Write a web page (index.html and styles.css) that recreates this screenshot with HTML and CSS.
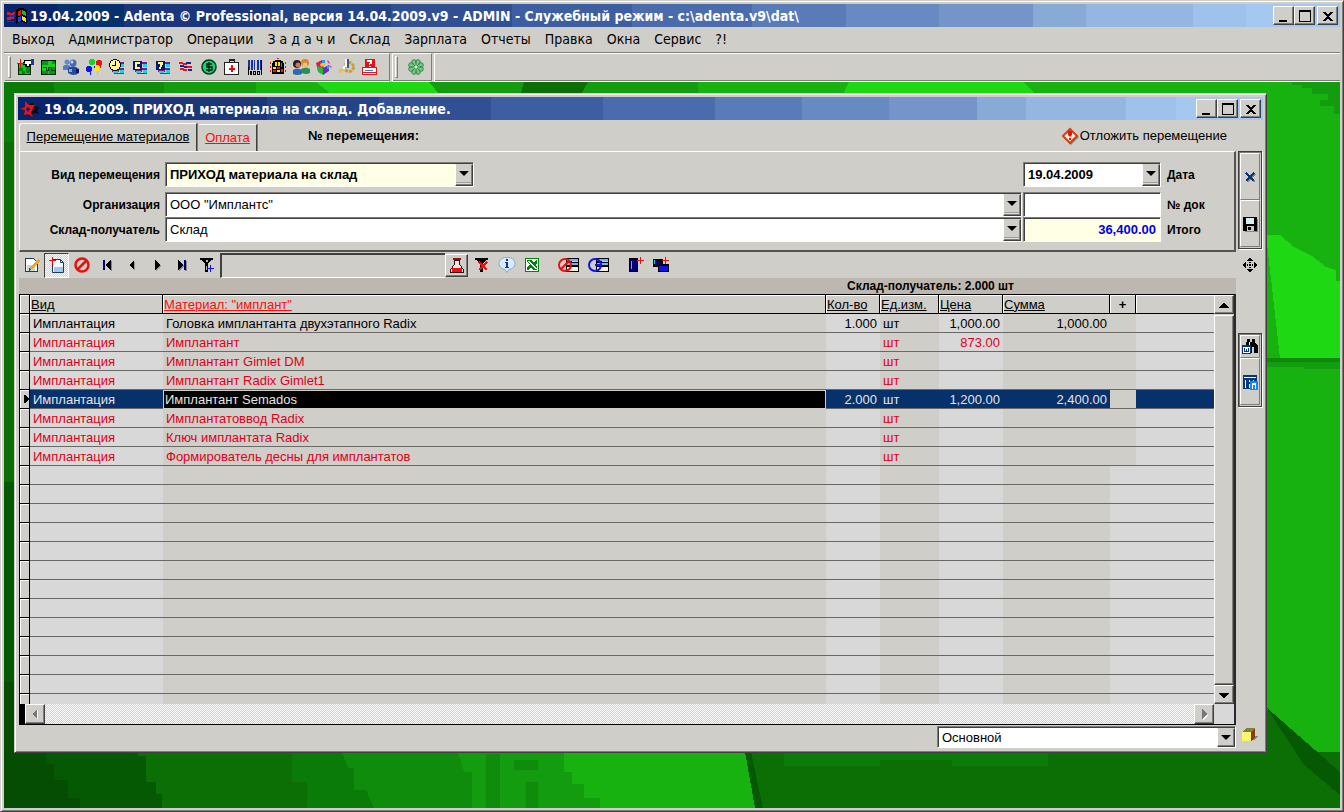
FILE: index.html
```
<!DOCTYPE html>
<html lang="ru">
<head>
<meta charset="utf-8">
<title>Adenta Professional</title>
<link rel="stylesheet" href="styles.css">
</head>
<body>
<div class="app">
  <header class="titlebar">
    <svg class="title-icon wide" viewBox="0 0 22 18"><path fill="#f01018" d="M1 5h3v1h3v-1h2v2h-1v1H1zM1 10h7v2H5v1H1z"/><path fill="#1838b0" d="M3 8h6v2H3zM1 14h7v1H1z"/><path fill="#000" d="M10 3l3-2h4l4 2v14l-4-2h-3l-4 2z"/><path fill="#f01018" d="M12 4l3-1v5l-3 1z"/><path fill="#10c020" d="M16 3l4 2v4l-4-2z"/><path fill="#1848e8" d="M12 10l3-1v5l-3 1z"/><path fill="#f8e010" d="M16 9l4 2v4l-4-2z"/></svg>
    <h1 class="title-text">19.04.2009 - Adenta © Professional, версия 14.04.2009.v9 - ADMIN - Служебный режим - c:\adenta.v9\dat\</h1>
    <div class="caption-buttons">
      <button class="cap" aria-label="Свернуть"><svg viewBox="0 0 16 14"><path d="M3 11h8v2H3z"/></svg></button>
      <button class="cap" aria-label="Развернуть"><svg viewBox="0 0 16 14"><path fill-rule="evenodd" d="M2 1h12v12H2zM3 3v9h10V3z"/></svg></button>
      <button class="cap cap-close" aria-label="Закрыть"><svg viewBox="0 0 16 14"><path d="M3 3h3v1h1v1h2V4h1V3h3v1h-1v1h-1v1h-1v1H9v1h1v1h1v1h1v1h1v1h-3v-1H9v-1H7v1H6v1H3v-1h1v-1h1V9h1V8h1V7H6V6H5V5H4V4H3z"/></svg></button>
    </div>
  </header>

  <nav class="menubar">
    <button>Выход</button><button>Администратор</button><button>Операции</button><button>З а д а ч и</button><button>Склад</button><button>Зарплата</button><button>Отчеты</button><button>Правка</button><button>Окна</button><button>Сервис</button><button>?!</button>
  </nav>

  <div class="toolbar">
    <div class="band">
      <span class="grip"></span>
      <button class="tool" aria-label="Ввод"><svg viewBox="0 0 18 18"><path fill="#002800" d="M2 5h13v12H2z"/><path fill="#10c818" d="M3 6h11v10H3z"/><path fill="#008a0c" d="M3 10h4v3H3zM10 9h4v6h-4zM6 13h3v3H6z"/><path fill="#000" d="M8 2h8v5h-2v2H9V7H7z"/><path fill="#fff" d="M9 3h6v3h-2v2h-2V6H9z"/><path fill="#20389c" d="M15 1h3v6h-3z"/><path fill="#f01010" d="M4 1h1v9H4zM1 5h8v1H1z"/></svg></button>
      <button class="tool" aria-label="График"><svg viewBox="0 0 18 18"><path fill="#001800" d="M2 2h15v15H2z"/><path fill="#18d020" d="M3 3h13v13H3z"/><path fill="#009a10" d="M3 3h6v4H3zM10 9h6v7h-6zM3 13h6v3H3zM13 3h3v3h-3z"/><path fill="#003808" d="M4 9h4v1H4zM7 10h1v3H7zM8 12h2v1H8zM9 9h1v3H9zM10 9h3v1h-3zM12 10h1v3h-1zM13 12h3v1h-3z"/></svg></button>
      <button class="tool" aria-label="Пациенты"><svg class="soft" viewBox="0 0 18 18"><circle cx="5" cy="4" r="2.500" fill="#6888d0"/><path fill="#5878c8" d="M1 8q4-3 7 0v4H1z"/><circle cx="11" cy="5" r="3.500" fill="#4468b8"/><circle cx="10" cy="4" r="1.500" fill="#c8d8f8"/><path fill="#284898" d="M6 10q6-4 11 1v4q-5 4-11 0z"/><path fill="#88a8e0" d="M7 11h3v3H7z"/><path fill="#101870" d="M14 11h3v4h-3z"/></svg></button>
      <button class="tool" aria-label="Шары"><svg viewBox="0 0 18 18"><circle cx="7" cy="4" r="3" fill="#10d820"/><circle cx="14" cy="5" r="3" fill="#f01010"/><circle cx="4" cy="11" r="3" fill="#1010f0"/><circle cx="12" cy="10" r="3" fill="#f8e810"/><path fill="#f01010" d="M15 8h1v2h-1z"/><path fill="#f8c010" d="M12 13h1v4h-1z"/><path fill="#1010f0" d="M5 14h1v3H5zM9 8h1v2H9z"/></svg></button>
      <button class="tool" aria-label="Время"><svg viewBox="0 0 18 18"><path fill="#801890" d="M10 4h6v2h-6zM4 12h7v2H4zM11 10h5v2h-5zM6 15h10v1H6z"/><path fill="#10d8e0" d="M12 6h4v3h-4zM5 13h5v2H5zM12 12h4v3h-4z"/><circle cx="7" cy="7" r="5.500" fill="#fff890" stroke="#000"/><path fill="#000" d="M7 3h1v5H4V7h3z"/></svg></button>
      <button class="tool" aria-label="Список C"><svg viewBox="0 0 18 18"><path fill="#801890" d="M10 4h6v2h-6zM4 12h7v2H4zM11 10h5v2h-5zM6 15h10v1H6z"/><path fill="#10d8e0" d="M12 6h4v3h-4zM5 13h5v2H5zM12 12h4v3h-4z"/><path fill="#001c70" d="M2 3h9v9H2z"/><path fill="#fff890" d="M4 4h5v2H6v3h3v2H4z"/></svg></button>
      <button class="tool" aria-label="Список 7"><svg viewBox="0 0 18 18"><path fill="#801890" d="M10 4h6v2h-6zM4 12h7v2H4zM11 10h5v2h-5zM6 15h10v1H6z"/><path fill="#10d8e0" d="M12 6h4v3h-4zM5 13h5v2H5zM12 12h4v3h-4z"/><path fill="#001c70" d="M2 3h9v9H2z"/><path fill="#fff890" d="M4 4h5v3H8v2H7v2H5V9h1V6H4z"/></svg></button>
      <button class="tool" aria-label="Обмен"><svg viewBox="0 0 18 18"><path fill="#f01018" d="M2 4h4v1h4v2H6V6H2zM10 8h5v2h-5zM3 10h4v1h3v2H6v-1H3z"/><path fill="#102890" d="M9 4h5v2H9zM3 7h4v2H3zM11 11h4v2h-4zM7 8h3v2H7z"/></svg></button>
      <button class="tool" aria-label="Касса"><svg class="soft" viewBox="0 0 18 18"><circle cx="9" cy="9" r="7" fill="#18d078" stroke="#003818" stroke-width="1.500"/><path fill="none" stroke="#001808" stroke-width="1.300" d="M12 6H7v3h5v3H6M9 4v10"/></svg></button>
      <button class="tool" aria-label="Аптечка"><svg viewBox="0 0 18 18"><path fill="#222" d="M6 1h6v4h-1V3H7v2H6z"/><rect x="1.500" y="4.500" width="14" height="12" rx="1" fill="#fff" stroke="#222"/><path fill="#e01010" d="M8 7h2v3h2v2h-2v2H8v-2H6v-2h2z"/></svg></button>
      <button class="tool" aria-label="Штрих-код"><svg viewBox="0 0 18 18"><path fill="#1830a0" d="M2 2h2v10H2zM5 2h2v10H5zM8 2h1v10H8zM11 2h2v10h-2zM14 2h1v10h-1z"/><path fill="#000" d="M2 9h1v8H2zM4 13h2v4H4zM7 13h3v4H7zM11 13h3v4h-3zM15 2h1v15h-1z"/><path fill="#d0cec9" d="M8 14h1v2H8zM12 14h1v2h-1z"/></svg></button>
      <button class="tool" aria-label="Календарь"><svg viewBox="0 0 18 18"><path fill="#000" d="M6 2h6v1h2v2h1v11H3V5h1V3h2z"/><path fill="#f8e818" d="M6 4h2v4H6zM9 4h2v4H9zM4 9h3v2H4zM8 12h3v2H8z"/><path fill="#10b818" d="M12 5h1v4h-1z"/><path fill="#f01818" d="M4 12h3v2H4zM8 9h3v2H8zM12 11h2v3h-2zM1 4h1v2H1zM1 8h1v2H1zM1 12h1v2H1zM16 4h1v2h-1zM16 8h1v2h-1zM16 12h1v2h-1zM8 0h2v1H8z"/></svg></button>
      <button class="tool" aria-label="Персонал"><svg class="soft" viewBox="0 0 18 18"><circle cx="13" cy="5" r="4" fill="#d88828"/><path fill="#289058" d="M9 11q5-3 9 0v4q-4 2-8 0z"/><circle cx="5" cy="6" r="4" fill="#282020"/><circle cx="6" cy="7" r="2.500" fill="#c87858"/><circle cx="13" cy="7" r="2.500" fill="#f0c080"/><path fill="#3068b8" d="M1 12q4-3 9 0v4q-5 2-9 0z"/></svg></button>
      <button class="tool" aria-label="Отчёты"><svg class="soft" viewBox="0 0 18 18"><path fill="#e01850" d="M1 5l6-3 2 9-6 2z"/><path fill="#20b838" d="M2 8l6 2v7l-5-3z"/><path fill="#7028c8" d="M8 10l6-3v6l-6 4z"/><path fill="#f8c020" d="M5 6l5-3 1 4-5 2z"/><path fill="#20a0d8" d="M7 2h3v3H7zM12 8h2v3h-2z"/><path fill="#f030d0" d="M12 2l2 1 1 3-2-1zM15 7l2 2-1 1-2-2z"/></svg></button>
      <button class="tool" aria-label="Настройка"><svg class="soft" viewBox="0 0 18 18"><circle cx="11" cy="9" r="4.500" fill="none" stroke="#d89828" stroke-width="3" stroke-dasharray="3 1"/><path fill="#e8c050" d="M1 11h5v2H4v2H1z"/><path fill="#286088" d="M9 1h2v9H9z"/><path fill="#f8f8f8" d="M7 1h2v8H7zM5 8h2v3H5z"/></svg></button>
      <button class="tool" aria-label="Справка"><svg viewBox="0 0 18 18"><path fill="#d02020" d="M1 9h15v8H1z"/><path fill="#f8f8f8" d="M2 10h13v4H2zM2 15h13v1H2z"/><path fill="#5070c0" d="M4 12h8v1H4z"/><path fill="#e81010" d="M4 1h10v9H4z"/><path fill="#fff" d="M6 2h5v4H9v1H8V5h1V4H6zM8 8h2v1H8z"/></svg></button>
    </div>
    <div class="band band-solo">
      <span class="grip"></span>
      <button class="tool tool-solo" aria-label="Клевер"><svg class="soft" viewBox="0 0 18 18"><g fill="#78c888" stroke="#388850"><circle cx="7" cy="4" r="2.300"/><circle cx="11" cy="4" r="2.300"/><circle cx="14" cy="7" r="2.300"/><circle cx="14" cy="11" r="2.300"/><circle cx="11" cy="14" r="2.300"/><circle cx="7" cy="14" r="2.300"/><circle cx="4" cy="11" r="2.300"/><circle cx="4" cy="7" r="2.300"/></g><circle cx="9" cy="9" r="4" fill="#78c888"/><path stroke="#388850" d="M9 3v12M3 9h12M5 5l8 8M13 5l-8 8"/><circle cx="9" cy="9" r="1.500" fill="#d0f0d0"/></svg></button>
    </div>
    <div class="band band-rest"></div>
  </div>

  <main class="desktop">
    <svg class="wallpaper" viewBox="0 0 1336 726" preserveAspectRatio="none" aria-hidden="true">
      <path fill="#17b20f" d="M0 0h1336v726H0z"/>
      <path fill="#139c0f" d="M0 0h252v20H0z"/><path fill="#108c0c" d="M0 0h160v20H0z"/><path fill="#0a7a08" d="M0 0h50v200H0z"/>
      <path fill="#1fd814" d="M312 0h113l12 14H330zM845 0h174l14 14H838z"/>
      <path fill="#139c0f" d="M425 0h115v14H437z"/><path fill="#0c6f05" d="M520 0h64l-8 14h-60z"/><path fill="#139c0f" d="M584 0h110v14H576z"/>
      <path fill="#0c6f05" d="M0 60h12v400H0z"/><path fill="#045902" d="M0 400h12v200H0z"/>
      <path fill="#139c0f" d="M0 670h560v20h8v12h12v14h16v10H0z"/>
      <path fill="#108c0c" d="M0 670h454l6 20h8v36H0zM482 672h14v54h-14zM510 678h24v10h-24zM522 700h12v26h-12z"/>
      <path fill="#0a7a08" d="M0 670h338l6 16h6v22h12l8 18H0z"/>
      <path fill="#0c6f05" d="M0 670h288v30h15v26H0z"/>
      <path fill="#045902" d="M0 670h134v4h8v26h10v12h6v14H0z"/>
      <path fill="#044d02" d="M0 600h12v70h30v12h8v16h14v18h12v10H0z"/>
      <path fill="#0c6f05" d="M742 670h594v56H752z"/><path fill="#045902" d="M741 670h6l12 56h-8z"/>
      <path fill="#0a7a08" d="M780 670h264v14h-96v-6h-72v6h-96z"/>
      <path fill="#0c6f05" d="M1262 626v100h74v-14z"/>
      <path fill="#045902" d="M1262 625l74 65v23l-36-30z"/>
      <path fill="#1fd814" d="M1262 153h14l14 12 18 9 14 11 10 3v11h14v4l8-9 8 5v77h-86z"/>
      <path fill="#0f8a08" d="M1262 276h74v4h-74z"/><path fill="#139c0f" d="M1262 280h74v7h-36v-2h-38z"/>
      <path fill="#139c0f" d="M1288 0h48v32h-6v-8h-14v-6h8v-6h-16V6h-10V3h-10z"/>
    </svg>

    <section class="child">
      <header class="titlebar">
        <svg class="title-icon soft" viewBox="0 0 20 18"><path fill="#100808" fill-rule="evenodd" d="M8 6l5-4 1 4 6 1-3 3 2 4-5-1-5 3 1-5zM12 7l-2 3 3 1 2-3z"/><path fill="#f01010" fill-rule="evenodd" d="M5 1l4 4h6l-2 3-2 5 2 4-5-3-4 1 1-5-5-1 5-2zM8 7L6 9l2 3 2-3z"/></svg>
        <h2 class="title-text">19.04.2009. ПРИХОД материала на склад. Добавление.</h2>
        <div class="caption-buttons">
          <button class="cap" aria-label="Свернуть"><svg viewBox="0 0 16 14"><path d="M3 11h8v2H3z"/></svg></button>
          <button class="cap" aria-label="Развернуть"><svg viewBox="0 0 16 14"><path fill-rule="evenodd" d="M2 1h12v12H2zM3 3v9h10V3z"/></svg></button>
          <button class="cap cap-close" aria-label="Закрыть"><svg viewBox="0 0 16 14"><path d="M3 3h3v1h1v1h2V4h1V3h3v1h-1v1h-1v1h-1v1H9v1h1v1h1v1h1v1h1v1h-3v-1H9v-1H7v1H6v1H3v-1h1v-1h1V9h1V8h1V7H6V6H5V5H4V4H3z"/></svg></button>
        </div>
      </header>

      <div class="tabs">
        <button class="tab tab-active">Перемещение материалов</button>
        <button class="tab tab-pay">Оплата</button>
        <strong class="move-no">№ перемещения:</strong>
        <button class="postpone"><svg class="soft" viewBox="0 0 18 18"><path fill="#888" d="M10 3l8 7-8 8-7-7z"/><path fill="#f4f0e8" stroke="#d04010" stroke-width="2" d="M9 2l7 7-7 7-7-7z"/><path fill="#f01010" d="M7 4h4v4l-2 2-2-2zM8 11h2v2H8z"/></svg>Отложить перемещение</button>
      </div>

      <div class="work">
        <div class="primary">
          <form class="form">
            <label for="kind">Вид перемещения</label>
            <div class="combo combo-kind"><select id="kind"><option>ПРИХОД материала на склад</option></select><span class="drop"></span></div>
            <div class="combo"><input id="date" class="strong" type="text" value="19.04.2009"><button type="button" class="drop" aria-label="Выбрать дату"></button></div>
            <label class="after" for="date">Дата</label>

            <label for="org">Организация</label>
            <div class="combo"><select id="org"><option>ООО "Имплантс"</option></select><span class="drop"></span></div>
            <div class="combo"><input id="doc" type="text" value=""></div>
            <label class="after" for="doc">№ док</label>

            <label for="store">Склад-получатель</label>
            <div class="combo"><select id="store"><option>Склад</option></select><span class="drop"></span></div>
            <div class="combo combo-total"><input id="total" class="total" type="text" value="36,400.00"></div>
            <label class="after" for="total">Итого</label>
          </form>

          <div class="gridbar">
            <button class="gtool" aria-label="Изменить"><svg viewBox="0 0 18 18"><path fill="#fff" stroke="#18386c" d="M2.500 2.500h8l4 4v9h-12z"/><path fill="#b8d8f8" d="M4 9h8v6H4z"/><path fill="#e8a820" d="M15 3l2 2-8 8-3 1 1-3z"/><path fill="#704010" d="M6 12l2 1-2 2z"/></svg></button>
            <button class="gtool pressed" aria-label="Добавить"><svg class="soft" viewBox="0 0 18 18"><path fill="#f4faff" stroke="#18386c" d="M4.500 3.500h8l3 3v10h-11z"/><path fill="#a0c8e8" d="M6 11h9v5H6z"/><path fill="none" stroke="#18386c" d="M12.500 3.500v3h3"/><path fill="#e01010" d="M4 1h1v8H4zM1 4h7v1H1z"/></svg></button>
            <button class="gtool" aria-label="Удалить"><svg class="soft" viewBox="0 0 18 18"><g fill="none" stroke="#e81010" stroke-width="2.500"><circle cx="9" cy="9" r="6.500"/><path d="M13 5l-9 9"/></g></svg></button>
            <button class="gtool" aria-label="Первая"><svg viewBox="0 0 18 18"><path fill="#888" d="M8 10l6-5v10z"/><path fill="#000078" d="M5 4h2v10H5z"/><path d="M7 9l6-5v10z"/></svg></button>
            <button class="gtool" aria-label="Назад"><svg viewBox="0 0 18 18"><path fill="#999" d="M7 10l5-5v10z"/><path d="M6 9l5-5v10z"/></svg></button>
            <button class="gtool" aria-label="Вперёд"><svg viewBox="0 0 18 18"><path fill="#999" d="M13 10L8 5v10z"/><path d="M12 9L7 4v10z"/></svg></button>
            <button class="gtool" aria-label="Последняя"><svg viewBox="0 0 18 18"><path fill="#888" d="M11 10L6 5v10zM12 5h2v10h-2z"/><path d="M11 9L5 4v10z"/><path fill="#000078" d="M11 4h2v10h-2z"/></svg></button>
            <button class="gtool" aria-label="Фильтр"><svg viewBox="0 0 18 18"><path d="M2 2h13v2h-2l-3 4v8H7V8L4 4H2z"/><path fill="#bbb" d="M8 4h2v2H8zM8 10h1v4H8z"/><path fill="#1010f0" d="M12 9h1v7h-1zM9 12h7v1H9z"/></svg></button>
            <input class="filter-input" type="text" aria-label="Фильтр">
            <button class="flask" aria-label="Применить фильтр"><svg viewBox="0 0 18 18"><path fill="#e8e8e8" stroke="#301010" d="M6.500 4v4l-4 6v2h13v-2l-4-6V4z"/><path fill="#901010" d="M5 2h8v2H5z"/><path fill="#f01010" d="M4 12h10v4H4z"/></svg></button>
            <button class="gtool" aria-label="Снять фильтр"><svg viewBox="0 0 18 18"><path d="M2 2h13v2h-2l-3 4v8H7V8L4 4H2z"/><path stroke="#f01010" stroke-width="2.500" d="M6 6l8 8M14 6l-8 8"/></svg></button>
            <button class="gtool" aria-label="Информация"><svg class="soft" viewBox="0 0 18 18"><path fill="#d8ecfc" stroke="#88a8d0" d="M9 1.500a7 6 0 0 1 2 12l-2 3-2-3a7 6 0 0 1 2-12z"/><path fill="#103890" d="M8 3h2v2H8zM7 6h3v5h1v1H7v-1h1V7H7z"/></svg></button>
            <button class="gtool" aria-label="Excel"><svg viewBox="0 0 18 18"><path fill="#088010" d="M2 2h14v14H2z"/><path fill="#fff" d="M3 3h12v12H3z"/><path fill="#088010" d="M4 4h5l2 3 2-3h1v3l-2 2 2 2v3h-4l-2-3-2 3H4v-3l3-2-3-4z"/><path stroke="#fff" stroke-width="1.500" d="M6 5l7 8"/></svg></button>
            <button class="gtool wide-a" aria-label="Скрыть строки"><svg viewBox="0 0 22 18"><path d="M9 2h13v14H9z"/><path fill="#78b0f0" d="M10 3h11v2H10zM10 7h11v2H10z"/><path fill="#d0cec9" d="M15 5h6v1h-6z"/><path fill="#f8f0d8" d="M10 11h11v4H10z"/><g class="soft" fill="none" stroke="#e81010" stroke-width="2"><circle cx="8" cy="9" r="6"/><path d="M12 5l-8 8"/></g></svg></button>
            <button class="gtool wide-b" aria-label="Показать строки"><svg viewBox="0 0 22 18"><path d="M9 2h13v14H9z"/><path fill="#78b0f0" d="M10 3h11v2H10zM10 7h11v2H10z"/><path fill="#d0cec9" d="M15 5h6v1h-6z"/><path fill="#f8f0d8" d="M10 11h11v4H10z"/><g class="soft" fill="none" stroke="#1010f0" stroke-width="2"><circle cx="8" cy="9" r="6"/><path d="M8 9h6"/></g></svg></button>
            <button class="gtool" aria-label="Добавить карточку"><svg viewBox="0 0 18 18"><path fill="#000" d="M2 2h9v14H2z"/><path fill="#000070" d="M3 4h7v11H3z"/><path fill="#18d0e8" d="M4 5h1v8H4z"/><path fill="#e81010" d="M13 1h1v7h-1zM10 4h7v1h-7z"/></svg></button>
            <button class="gtool" aria-label="Копировать карточку"><svg viewBox="0 0 18 18"><path d="M1 3h10v8H1z"/><path fill="#000078" d="M3 5h7v5H3z"/><path fill="#18d0e8" d="M2 4h1v4H2z"/><path d="M6 8h11v8H6z"/><path fill="#1010e8" d="M7 10h9v5H7z"/><path fill="#e81010" d="M13 1h1v7h-1zM10 4h7v1h-7z"/></svg></button>
          </div>

          <div class="summary"><strong>Склад-получатель: 2.000 шт</strong></div>

          <div class="gridbox">
            <div class="gridview">
              <table class="grid">
                <colgroup><col class="c-mark"><col class="c-kind"><col><col class="c-qty"><col class="c-unit"><col class="c-price"><col class="c-sum"><col class="c-plus"><col class="c-rest"></colgroup>
                <thead><tr><th></th><th><u>Вид</u></th><th class="sorted"><u>Материал: "имплант"</u></th><th><u>Кол-во</u></th><th><u>Ед.изм.</u></th><th><u>Цена</u></th><th><u>Сумма</u></th><th class="plus">+</th><th></th></tr></thead>
                <tbody>
                  <tr class="row-data row-black"><td></td><td>Имплантация</td><td>Головка имплантанта двухэтапного Radix</td><td>1.000</td><td>шт</td><td>1,000.00</td><td>1,000.00</td><td></td><td></td></tr>
                  <tr class="row-data"><td></td><td>Имплантация</td><td>Имплантант</td><td></td><td>шт</td><td>873.00</td><td></td><td></td><td></td></tr>
                  <tr class="row-data"><td></td><td>Имплантация</td><td>Имплантант Gimlet DM</td><td></td><td>шт</td><td></td><td></td><td></td><td></td></tr>
                  <tr class="row-data"><td></td><td>Имплантация</td><td>Имплантант Radix Gimlet1</td><td></td><td>шт</td><td></td><td></td><td></td><td></td></tr>
                  <tr class="row-data row-current"><td><svg class="marker" viewBox="0 0 5 8"><path d="M0 0h1l4 4-4 4H0z"/></svg></td><td>Имплантация</td><td>Имплантант Semados</td><td>2.000</td><td>шт</td><td>1,200.00</td><td>2,400.00</td><td></td><td></td></tr>
                  <tr class="row-data"><td></td><td>Имплантация</td><td>Имплантатоввод Radix</td><td></td><td>шт</td><td></td><td></td><td></td><td></td></tr>
                  <tr class="row-data"><td></td><td>Имплантация</td><td>Ключ имплантата Radix</td><td></td><td>шт</td><td></td><td></td><td></td><td></td></tr>
                  <tr class="row-data"><td></td><td>Имплантация</td><td>Формирователь десны для имплантатов</td><td></td><td>шт</td><td></td><td></td><td></td><td></td></tr>
                  <tr><td></td><td></td><td></td><td></td><td></td><td></td><td></td><td></td><td></td></tr>
                  <tr><td></td><td></td><td></td><td></td><td></td><td></td><td></td><td></td><td></td></tr>
                  <tr><td></td><td></td><td></td><td></td><td></td><td></td><td></td><td></td><td></td></tr>
                  <tr><td></td><td></td><td></td><td></td><td></td><td></td><td></td><td></td><td></td></tr>
                  <tr><td></td><td></td><td></td><td></td><td></td><td></td><td></td><td></td><td></td></tr>
                  <tr><td></td><td></td><td></td><td></td><td></td><td></td><td></td><td></td><td></td></tr>
                  <tr><td></td><td></td><td></td><td></td><td></td><td></td><td></td><td></td><td></td></tr>
                  <tr><td></td><td></td><td></td><td></td><td></td><td></td><td></td><td></td><td></td></tr>
                  <tr><td></td><td></td><td></td><td></td><td></td><td></td><td></td><td></td><td></td></tr>
                  <tr><td></td><td></td><td></td><td></td><td></td><td></td><td></td><td></td><td></td></tr>
                  <tr><td></td><td></td><td></td><td></td><td></td><td></td><td></td><td></td><td></td></tr>
                  <tr><td></td><td></td><td></td><td></td><td></td><td></td><td></td><td></td><td></td></tr>
                  <tr><td></td><td></td><td></td><td></td><td></td><td></td><td></td><td></td><td></td></tr>
                </tbody>
              </table>
            </div>
            <div class="vscroll">
              <button class="sbtn" aria-label="Вверх"><svg viewBox="0 0 16 16"><path d="M7 6h2l4 5H3z"/></svg></button>
              <div class="thumb"></div>
              <button class="sbtn" aria-label="Вниз"><svg viewBox="0 0 16 16"><path d="M7 11h2l4-5H3z"/></svg></button>
            </div>
            <div class="hscroll">
              <button class="sbtn" aria-label="Влево"><svg viewBox="0 0 16 16"><path fill="#fff" d="M11 4v10l-1-1V4z"/><path fill="#777" d="M5 8l5-5v10z"/></svg></button>
              <div class="track"></div>
              <button class="sbtn" aria-label="Вправо"><svg viewBox="0 0 16 16"><path fill="#fff" d="M12 9l-5 5V5z"/><path fill="#777" d="M11 8L6 3v10z"/></svg></button>
            </div>
            <div class="corner"></div>
          </div>
        </div>

        <aside class="side">
          <div class="side-group">
            <button aria-label="Отмена"><svg viewBox="0 0 18 18"><path fill="none" stroke="#888" stroke-width="2" d="M6 6l8 8M14 6l-8 8"/><path fill="none" stroke="#043878" stroke-width="2" d="M5 5l8 8M13 5l-8 8"/></svg></button>
            <button aria-label="Сохранить"><svg viewBox="0 0 18 18"><path fill="#888" d="M4 4h13v13H4z"/><path d="M2 2h14v14H2z"/><path fill="#d8f0f0" d="M5 3h8v6H5z"/><path fill="#c8c8c8" d="M6 11h7v5H6z"/><path d="M7 12h3v3H7z"/></svg></button>
          </div>
          <svg class="mover" viewBox="0 0 18 18"><path d="M9 1l3 4H6zM9 17l3-4H6zM1 9l4-3v6zM17 9l-4-3v6z"/><path d="M8 6h2v1H8zM8 11h2v1H8zM6 8h1v2H6zM11 8h1v2h-1zM8 8h2v2H8z"/></svg>
          <div class="side-group">
            <button class="short" aria-label="Найти"><svg viewBox="0 0 18 18"><path d="M6 1h3v3h2V1h3v3l3 4v7h-4V9h-2v6H5V4h1z"/><path fill="#fff" d="M8 4h1v3H8z"/><path fill="#fff" stroke="#043878" d="M1.500 7.500h8v8h-8z"/><path fill="#043878" d="M2 7h8v2H2zM3 10h1v3h1v-2h1v2h1v-3h1v4H3z"/></svg></button>
            <button aria-label="Таблица"><svg viewBox="0 0 18 18"><path fill="#043878" d="M2 2h14v14H2z"/><path fill="#fff" d="M3 4h12v1H3zM4 7h1v8H4zM8 7h1v2H8zM8 11h1v4H8zM12 7h1v3h-1z"/><path fill="#1088f0" d="M9 8h8v9H9z"/><path fill="#fff" d="M11 10h4v6h-1v-4h-2v4h-1z"/></svg></button>
          </div>
        </aside>
      </div>

      <footer class="bottom">
        <div class="combo combo-main"><select aria-label="Набор"><option>Основной</option></select><span class="drop"></span></div>
        <svg class="cube" viewBox="0 0 18 18"><path fill="#888" d="M13 10h4l-3 4h-3z"/><path fill="#808040" d="M1 6l4-4h9l-4 4z"/><path fill="#f8f868" d="M1 6h9v9H1z"/><path fill="#903808" d="M10 6l4-4v9l-4 4z"/></svg>
      </footer>
    </section>
  </main>
</div>
</body>
</html>
```

FILE: styles.css
```
:root {
  --face: #d0cec9;
  --light: #ffffff;
  --shade: #7f7d79;
  --dark: #404040;
  --ui: "Liberation Sans", Arial, sans-serif;
  --caption: "DejaVu Sans Condensed", "DejaVu Sans", sans-serif;
}

* { box-sizing: border-box; }

body {
  margin: 0;
  height: 100vh;
  overflow: hidden;
  background: var(--face);
  color: #000;
  font: 13px/16px var(--ui);
}

button, input, select {
  margin: 0;
  padding: 0;
  border: 0;
  border-radius: 0;
  background: transparent;
  color: inherit;
  font: inherit;
  appearance: none;
}

svg { display: block; flex: none; shape-rendering: crispEdges; }
.soft { shape-rendering: auto; }

.app {
  display: flex;
  flex-direction: column;
  height: 100%;
  padding: 3px;
  border: 1px solid;
  border-color: var(--face) var(--dark) var(--dark) var(--face);
  box-shadow: inset 1px 1px var(--light), inset -1px -1px var(--shade);
}

.titlebar {
  display: flex;
  align-items: center;
  flex: none;
  height: 23px;
  padding-right: 2px;
  color: #fff;
  background: linear-gradient(90deg,
    #08246c 4%, #05316e 4% 9%, #1b377a 9% 20%, #254487 20% 29%, #315094 29% 38%,
    #3d5ea0 38% 47%, #4b6cac 47% 56%, #597bb7 56% 63%, #688ac2 63% 70%,
    #7494ca 70% 77%, #88aad7 77% 81%, #96b6e2 81% 89%, #9fc2ec 89% 93%, #a5c8f0 93%);
}

.title-icon { width: 20px; height: 18px; margin: 0 4px 0 2px; }
.title-icon.wide { width: 22px; margin-right: 2px; }

.title-text {
  flex: 1;
  min-width: 0;
  margin: 0;
  overflow: hidden;
  white-space: nowrap;
  font: bold 14px/20px var(--caption);
}

.caption-buttons { display: flex; flex: none; }

.cap, .sbtn, .flask {
  display: flex;
  align-items: center;
  justify-content: center;
  background: var(--face);
  border: 1px solid;
  border-color: var(--light) var(--dark) var(--dark) var(--light);
  box-shadow: inset -1px -1px var(--shade);
}

.cap { width: 21px; height: 19px; }
.cap svg { width: 16px; height: 14px; }
.cap-close { margin-left: 2px; }

.menubar {
  display: flex;
  gap: 14px;
  flex: none;
  height: 25px;
  padding: 0 0 2px 8px;
  align-items: center;
  font: 14px/20px var(--caption);
}

.toolbar {
  display: flex;
  gap: 2px;
  flex: none;
  height: 30px;
  border-top: 1px solid var(--shade);
}

.band {
  display: flex;
  align-items: center;
  padding: 0 8px 2px 3px;
  border: solid;
  border-width: 1px;
  border-color: var(--light) var(--shade) var(--light) transparent;
  box-shadow: inset 0 -1px var(--shade);
}

.band + .band { border-left-color: var(--light); }
.band-solo { padding: 0 4px 2px 2px; }
.band-rest { flex: 1; border-right: 0; }

.grip {
  width: 3px;
  height: 22px;
  margin-right: 2px;
  border: 1px solid;
  border-color: var(--light) var(--shade) var(--shade) var(--light);
}

.tool { width: 23px; height: 22px; display: flex; align-items: center; justify-content: center; }
.tool svg { width: 18px; height: 18px; }
.tool-solo { margin-left: 4px; }

.desktop {
  position: relative;
  display: flex;
  flex: 1;
  min-height: 0;
  padding: 11px 73px 55px 10px;
}

.wallpaper { position: absolute; inset: 0; width: 100%; height: 100%; }

.child {
  position: relative;
  display: flex;
  flex-direction: column;
  flex: 1;
  min-width: 0;
  min-height: 0;
  padding: 3px 3px 2px 3px;
  background: var(--face);
  border: 1px solid;
  border-color: var(--face) var(--dark) var(--dark) var(--face);
  box-shadow: inset 1px 1px var(--light), inset -1px -1px var(--shade);
}

.tabs {
  display: flex;
  align-items: flex-end;
  flex: none;
  height: 31px;
  padding-left: 1px;
}

.tab {
  text-decoration: underline;
  border: 1px solid;
  border-color: var(--light) var(--dark) transparent var(--light);
  box-shadow: 1px 0 var(--shade);
  border-bottom: 0;
}

.tab-active { width: 178px; height: 28px; padding-bottom: 2px; border-radius: 3px 0 0 0; }
.tab-pay { width: 58px; height: 27px; margin-left: 2px; color: #f01010; border-left: 0; }
.move-no { padding: 0 0 7px 51px; }
.postpone { display: flex; align-items: center; gap: 1px; margin-left: auto; margin-right: 36px; padding-bottom: 6px; }
.postpone svg { width: 18px; height: 18px; }

.work { display: flex; flex: 1; min-height: 0; gap: 2px; }

.primary {
  display: flex;
  flex-direction: column;
  flex: 1;
  min-width: 0;
  padding-left: 1px;
}

.form {
  display: grid;
  grid-template-columns: 140px minmax(0, 1fr) 139px 73px;
  grid-template-rows: 30px 25px 25px;
  padding: 10px 0 8px;
  border: solid;
  border-width: 1px 2px 2px 1px;
  border-color: var(--light) #55534f #55534f var(--light);
}

.form label { align-self: center; text-align: right; font-size: 12px; font-weight: bold; }
.form label.after { text-align: left; padding-left: 6px; }
.form > .combo { margin-left: 5px; }
.form > .combo + .combo { margin-left: 1px; }
.form > :nth-child(-n+4) { margin-bottom: 5px; }

.combo {
  display: flex;
  min-width: 0;
  background: #fff;
  border: 1px solid;
  border-color: var(--shade) var(--light) var(--light) var(--shade);
  box-shadow: inset 1px 1px var(--dark);
  padding: 1px 0 0 2px;
}

.combo select, .combo input { flex: 1; min-width: 0; width: 100%; padding-left: 2px; }
.combo-kind { width: 309px; }
.combo-kind, .combo-total { background: #ffffe6; }
.combo-kind select, .combo .strong { font-weight: bold; }
.combo .total { color: #0000e8; font-weight: bold; text-align: right; padding-right: 4px; }

.drop {
  display: flex;
  justify-content: center;
  flex: none;
  width: 18px;
  padding-top: 6px;
  background: linear-gradient(var(--shade), var(--light)) 0 17px / 100% 2px no-repeat, var(--face);
  border: 1px solid;
  border-color: var(--face) var(--dark) var(--dark) var(--light);
  box-shadow: inset -1px -1px var(--shade);
}

.drop::before {
  content: "";
  width: 0;
  height: 0;
  border: 5px solid transparent;
  border-top-color: #000;
  border-bottom: 0;
}

.gridbar {
  display: flex;
  align-items: center;
  flex: none;
  height: 26px;
}

.gtool { display: flex; align-items: center; justify-content: center; width: 25px; height: 25px; }
.gtool svg { width: 18px; height: 18px; }
.gtool.wide-a { width: 30px; margin-left: 9px; }
.gtool.wide-b { width: 30px; margin-right: 10px; }
.gtool.wide-a svg, .gtool.wide-b svg { width: 22px; }

.pressed {
  border: 1px solid;
  border-color: var(--dark) var(--light) var(--light) var(--dark);
  background: repeating-conic-gradient(#fff 0 25%, #d0cec9 0 50%) 0 0 / 2px 2px;
}

.filter-input {
  width: 225px;
  height: 25px;
  margin-left: 1px;
  border: solid;
  border-width: 2px 0 1px 2px;
  border-color: var(--dark) var(--light) var(--light) var(--dark);
}

.flask { width: 23px; height: 23px; margin-right: 1px; }
.flask svg { width: 18px; height: 18px; }

.summary {
  flex: none;
  height: 16px;
  padding-right: 222px;
  text-align: right;
  font-size: 12px;
  background: #bdb7af;
}

.gridbox {
  display: grid;
  grid-template-columns: minmax(0, 1fr) 20px;
  grid-template-rows: minmax(0, 1fr) 20px;
  flex: 1;
  min-height: 0;
  border: 1px solid #000;
  border-right: 2px solid #2a2a2a;
  background: #d8d8d8;
}

.gridview { overflow: hidden; }

.grid { width: 100%; table-layout: fixed; border-collapse: separate; border-spacing: 0; }
.c-mark { width: 10px; }
.c-kind { width: 133px; }
.c-qty { width: 54px; }
.c-unit { width: 59px; }
.c-price { width: 64px; }
.c-sum { width: 107px; }
.c-plus { width: 26px; }
.c-rest { width: 78px; }

.grid th, .grid td {
  height: 19px;
  padding: 0 3px;
  overflow: hidden;
  white-space: nowrap;
  line-height: 17px;
}

.grid th {
  padding: 0 1px;
  background: var(--face);
  border: solid #000;
  border-width: 0 1px 1px 0;
  box-shadow: inset 1px 1px var(--light);
  font-weight: normal;
  text-align: left;
}
.grid th:last-child { border-right: 0; }
.grid .sorted { color: #f01010; }
.grid .plus { text-align: center; font-weight: bold; }

.grid td { border-bottom: 1px solid #6a6966; background: #d8d8d8; }
.grid td:nth-child(1), .grid td:nth-child(3), .grid td:nth-child(5), .grid td:nth-child(7),
.grid .row-data td:nth-child(8) { background: var(--face); }
.grid td:nth-child(4), .grid td:nth-child(6), .grid td:nth-child(7) { text-align: right; }
.grid td:first-child {
  padding: 0;
  border-right: 1px solid #000;
  border-bottom-color: #000;
  box-shadow: inset 1px 1px var(--light);
}

.row-data { color: #dc0020; }
.row-black { color: #000; }
.grid .row-current td:not(:first-child):not(:nth-child(8)) { background: #06316b; color: #e4e4e4; }
.grid .row-current td:nth-child(3):not(:first-child) {
  padding: 0 2px;
  background: #000;
  outline: 1px solid #d0cec9;
  outline-offset: -1px;
}
.marker { width: 5px; height: 8px; margin-left: auto; }

.vscroll { display: flex; flex-direction: column; background: var(--face); }
.sbtn { flex: none; width: 20px; height: 19px; }
.sbtn svg { width: 16px; height: 16px; }
.thumb {
  flex: 1;
  margin-top: 1px;
  border: 1px solid;
  border-color: var(--light) var(--dark) var(--dark) var(--light);
  box-shadow: inset -1px -1px var(--shade);
}

.hscroll { display: flex; border-left: 5px solid #000; }
.hscroll .sbtn { height: 20px; }
.track { flex: 1; background: repeating-conic-gradient(#fff 0 25%, #d0cec9 0 50%) 0 0 / 2px 2px; }

.side { display: flex; flex-direction: column; align-items: flex-start; flex: none; width: 25px; }

.side-group {
  width: 24px;
  padding: 1px;
  border: 1px solid var(--dark);
  box-shadow: 1px 1px var(--light), inset 1px 1px var(--shade);
}
.side-group button {
  display: flex;
  align-items: center;
  justify-content: center;
  width: 100%;
  height: 47px;
  border: 1px solid;
  border-color: var(--light) var(--shade) var(--shade) var(--light);
}
.side-group .short { height: 23px; }
.side-group svg { width: 18px; height: 18px; }
.mover { width: 18px; height: 18px; margin: 7px 0 59px 3px; }

.bottom {
  display: flex;
  align-items: flex-start;
  justify-content: flex-end;
  flex: none;
  height: 25px;
  padding: 1px 4px 0 0;
}
.combo-main { width: 299px; height: 22px; margin-right: 5px; }
.cube { width: 18px; height: 18px; }
```
